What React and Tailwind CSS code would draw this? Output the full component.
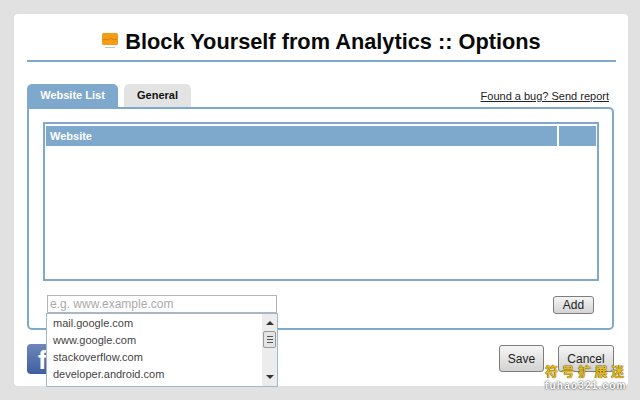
const SITES = ['mail.google.com', 'www.google.com', 'stackoverflow.com', 'developer.android.com']

function Logo() {
  return (
    <svg width="16" height="16" viewBox="0 0 16 16" className="shrink-0">
      <rect x="0" y="0" width="16" height="12" rx="1.5" fill="#f59c14" />
      <path d="M1 7l3-1 2 1 3-2 2 2 4-1" fill="none" stroke="#c97a08" strokeWidth="0.8" />
      <rect x="3" y="14" width="10" height="1" fill="#c9c4bb" />
    </svg>
  )
}

function Scrollbar() {
  return (
    <div className="w-[15px] shrink-0 bg-[#ececec] flex flex-col items-center">
      <div className="mt-[7px] w-0 h-0 border-x-[4px] border-x-transparent border-b-[4px] border-b-[#333]" />
      <div className="mt-[6px] w-[13px] h-[17px] rounded-[2px] border border-[#9a9a9a] bg-[#e4e4e4] flex flex-col items-center justify-center gap-[2px]">
        <div className="w-[6px] h-px bg-[#555]" />
        <div className="w-[6px] h-px bg-[#555]" />
        <div className="w-[6px] h-px bg-[#555]" />
      </div>
      <div className="mt-auto mb-[7px] w-0 h-0 border-x-[4px] border-x-transparent border-t-[4px] border-t-[#333]" />
    </div>
  )
}

export default function App() {
  return (
    <div className="relative w-[640px] h-[400px] overflow-hidden bg-[#e1e1e1] pt-[14px] pl-[14px] font-['Liberation_Sans',Arial,sans-serif]">
      <div className="w-[614px] h-[372px] bg-white rounded-[4px] pl-[13px] pr-[12px]">
        {/* Header */}
        <div className="h-[48px] border-b-2 border-[#7fa9cc] flex items-center justify-center gap-[7px] pt-[10px]">
          <div className="-mt-[2px]"><Logo /></div>
          <h1 className="text-[21.75px] leading-[26px] font-bold text-[#0a0a0a]">Block Yourself from Analytics :: Options</h1>
        </div>

        {/* Tabs */}
        <div className="mt-[22px] flex items-end h-[23px]">
          <div className="w-[91px] h-[23px] bg-[#7fa9cc] rounded-t-[5px] text-white text-[11px] font-bold flex items-center justify-center">Website List</div>
          <div className="ml-[6px] w-[67px] h-[23px] bg-[#e3e3e3] rounded-t-[5px] text-[#111] text-[11px] font-bold flex items-center justify-center">General</div>
          <a className="ml-auto mr-[7px] mb-[4px] text-[11px] leading-[14px] text-[#222] underline">Found a bug? Send report</a>
        </div>

        {/* Panel */}
        <div className="relative w-[587px] h-[223px] border-2 border-[#7fa9cc] rounded-b-[5px] rounded-tr-[5px] pl-[14px] pr-[13px] pt-[13px]">
          <div className="h-[159px] border-2 border-[#7fa9cc] px-[1px] py-[2px]">
            <div className="flex h-[20px] gap-[2px] bg-white">
              <div className="flex-1 bg-[#7fa9cc] text-white text-[11px] font-bold leading-[20px] pl-[4px]">Website</div>
              <div className="w-[37px] bg-[#7fa9cc]" />
            </div>
          </div>
          <div className="mt-[14px] flex items-start pl-[4px] pr-[5px]">
            <div className="w-[230px] h-[18px] border border-[#b5b5b5] text-[12px] leading-[16px] text-[#aaa] pl-[2px]">e.g. www.example.com</div>
            <button className="ml-auto mt-[1px] w-[41px] h-[18px] border border-[#7d7d7d] rounded-[3px] bg-gradient-to-b from-[#f4f4f4] to-[#d4d4d4] text-[12px] leading-[15px] text-[#222]">Add</button>
          </div>
          {/* Autocomplete */}
          <div className="absolute left-[17px] top-[204px] z-10 w-[232px] h-[74px] bg-white border border-[#9db8d2] flex">
            <div className="flex-1 pl-[6px] pt-[1px] text-[#444] text-[11px]">
              {SITES.map((s) => (
                <div key={s} className="h-[17px] leading-[17px]">{s}</div>
              ))}
            </div>
            <Scrollbar />
          </div>
        </div>

        {/* Footer */}
        <div className="mt-[14px] flex items-start">
          <div className="w-[40px] h-[30px] rounded-[4px] bg-gradient-to-b from-[#6f86b8] to-[#3f5ea2] overflow-hidden pl-[11px]">
            <span className="block text-white text-[26px] leading-[32px] font-bold">f</span>
          </div>
          <button className="ml-auto mt-[1px] w-[45px] h-[27px] border border-[#7d7d7d] rounded-[3px] bg-gradient-to-b from-[#f6f6f6] to-[#d2d2d2] text-[12px] text-[#222]">Save</button>
          <button className="ml-[14px] mt-[1px] mr-[2px] w-[56px] h-[27px] border border-[#7d7d7d] rounded-[3px] bg-gradient-to-b from-[#f6f6f6] to-[#d2d2d2] text-[12px] text-[#222]">Cancel</button>
        </div>
      </div>

      {/* Watermark */}
      <div className="absolute left-[545px] top-[363px] w-[82px] whitespace-nowrap">
        <div className="text-[13px] leading-[16px] font-bold text-[#e8bb10] tracking-[3.5px] font-['Noto_Sans_CJK_SC',sans-serif] [text-shadow:0_0_1px_#000]">符号扩展迷</div>
        <div className="text-[10px] leading-[13px] font-bold text-white tracking-[1.2px] [text-shadow:0_0_2px_#000]">fuhao321.com</div>
      </div>
    </div>
  )
}
